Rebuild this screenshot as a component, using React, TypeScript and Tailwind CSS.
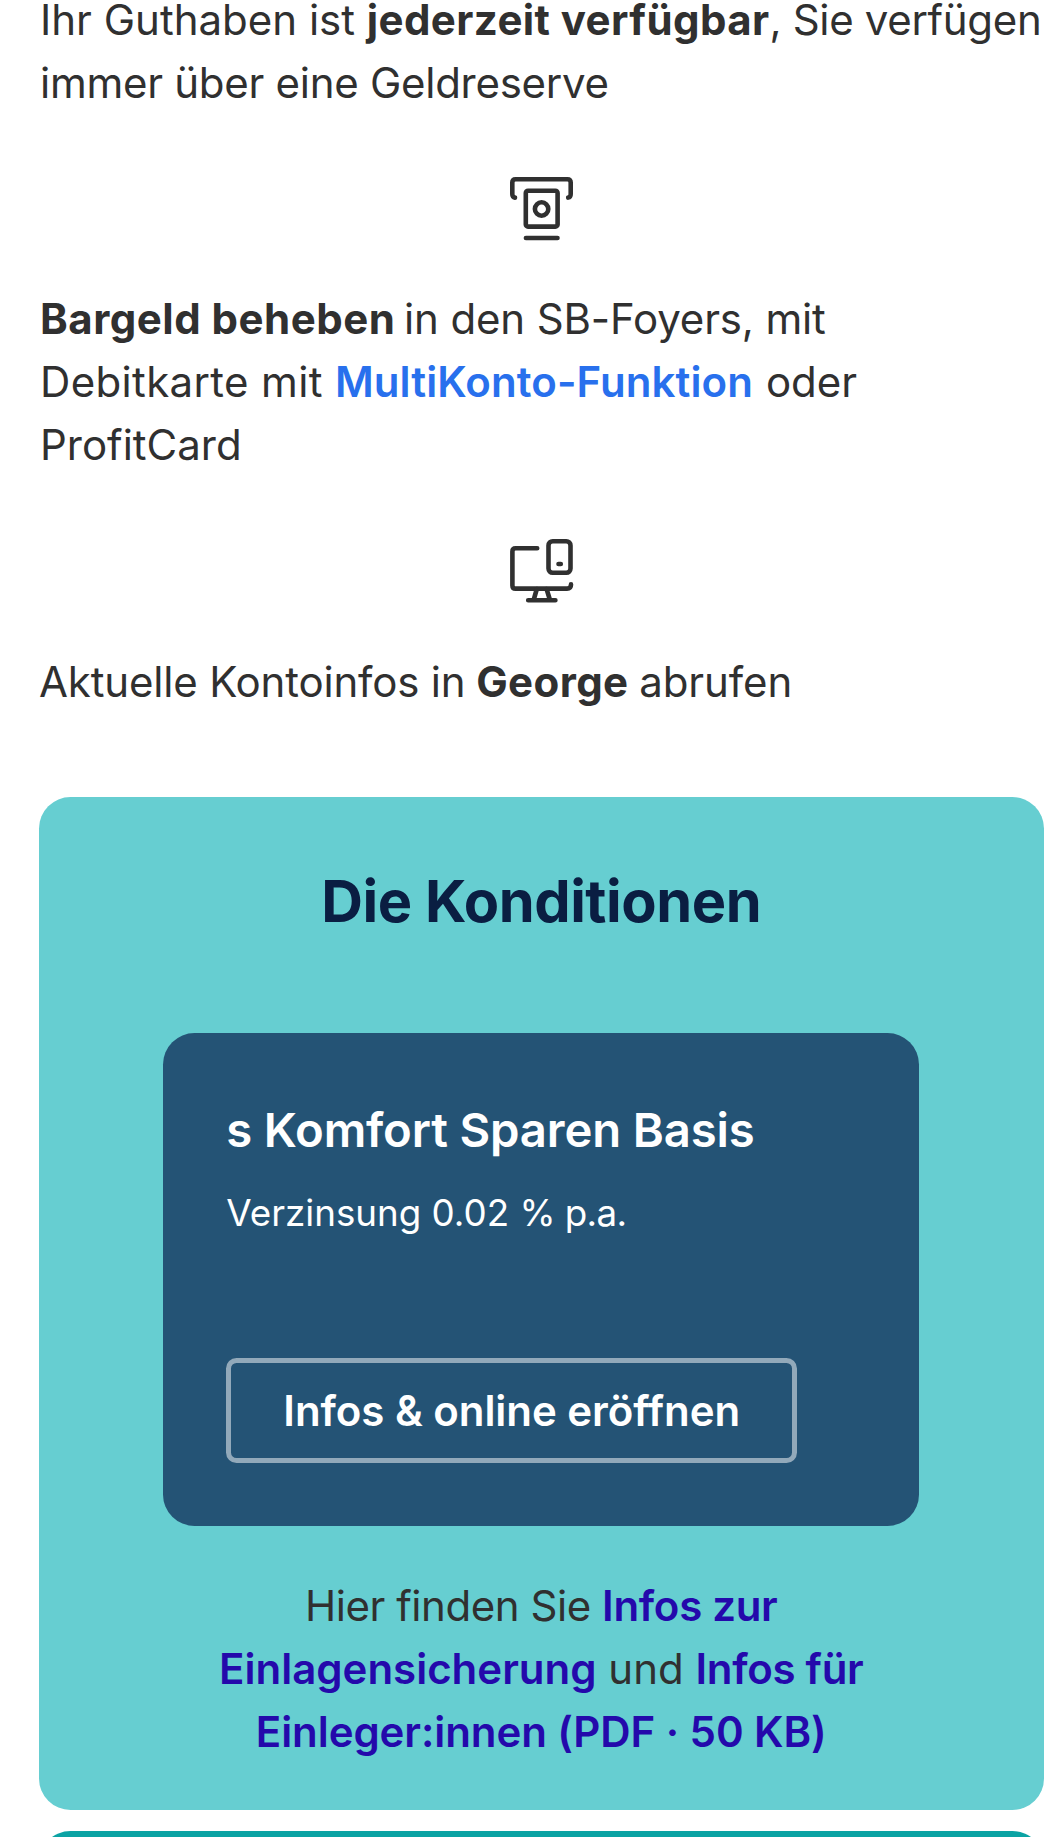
import type { ReactNode } from "react";

function Icon({ children }: { children: ReactNode }) {
  return (
    <svg
      viewBox="0 0 63 63"
      className="block size-[63px] mx-auto overflow-visible"
      fill="none"
      stroke="#303030"
      strokeWidth={4.6}
      strokeLinecap="round"
      strokeLinejoin="round"
    >
      {children}
    </svg>
  );
}

function CashIcon() {
  return (
    <Icon>
      <path d="M5 20.6Q2.3 20.2 2.3 17V5.5Q2.3 2.2 5.6 2.2H57.4Q60.7 2.2 60.7 5.5V17Q60.7 20.2 58.2 20.6" />
      <rect x="15.8" y="13.8" width="31.8" height="35.8" rx="2.2" />
      <circle cx="31.6" cy="32" r="6.7" />
      <path d="M15.9 61H47.5" />
    </Icon>
  );
}

function DevicesIcon() {
  return (
    <Icon>
      <path d="M27.2 9.3H5.6Q2.4 9.3 2.4 12.5V46.4Q2.4 49.6 5.6 49.6H57Q61 49.6 61 45.4" />
      <rect x="38.5" y="2.2" width="22" height="31.6" rx="4.2" />
      <path d="M48.5 25H50.8M18.2 61.2H45.4M26.8 50L23.8 60.5M36.6 50L39.8 60.5" />
    </Icon>
  );
}

function Text({ children }: { children: ReactNode }) {
  return <p className="text-[42px] leading-[63px] text-[#303030]">{children}</p>;
}

function InfoLink({ children }: { children: ReactNode }) {
  return (
    <a href="#" className="font-semibold text-[#2409ab]">
      {children}
    </a>
  );
}

export default function App() {
  return (
    <main className="w-[1059px] h-[1837px] overflow-hidden bg-white pl-[39px] pr-[15.5px] font-['Inter',sans-serif] whitespace-nowrap">
      <div className="-mt-3 pl-px">
        <Text>
          Ihr Guthaben ist <b className="font-bold tracking-[0.4px]">jederzeit verfügbar</b>
          <span className="tracking-[-0.33px]">, Sie verfügen</span>
          <br />
          <span className="tracking-[-0.27px]">immer über eine Geldreserve</span>
        </Text>
      </div>
      <div className="pt-[63px] pb-[47px]">
        <CashIcon />
      </div>
      <div className="pl-px">
        <Text>
          <b className="font-bold tracking-[0.5px]">Bargeld beheben</b>
          <span className="-ml-[3px] tracking-[-0.15px]"> in den SB-Foyers, mit</span>
          <br />
          <span className="tracking-[0.35px]">Debitkarte mit </span>
          <a href="#" className="font-semibold tracking-[0.1px] text-[#2870ed]">
            MultiKonto-Funktion
          </a>
          <span className="ml-px"> oder</span>
          <br />
          ProfitCard
        </Text>
      </div>
      <div className="pt-[63px] pb-12">
        <DevicesIcon />
      </div>
      <Text>
        <span className="tracking-[-0.17px]">Aktuelle Kontoinfos in </span>
        <b className="-ml-px font-bold tracking-[0.4px]">George</b>
        <span className="-ml-px tracking-[-0.1px]"> abrufen</span>
      </Text>

      <section className="mt-[84px] h-[1013px] rounded-[31.5px] bg-[#66ced1] pt-[68px] text-center">
        <h2 className="text-[57.75px] leading-[72px] font-bold tracking-[-0.45px] text-[#0a1e42]">Die Konditionen</h2>
        <div className="mx-auto mt-24 h-[493px] w-[756px] rounded-[31.5px] bg-[#245375] px-[63px] pt-[63px] text-left text-white">
          <h3 className="text-[47.25px] leading-[68px] font-semibold tracking-[-0.15px]">s Komfort Sparen Basis</h3>
          <p className="mt-5 text-[36.75px] leading-[57px]">
            Verzinsung 0.02 <span className="tracking-[-0.6px]">% p.a.</span>
          </p>
          <button className="mt-[117px] h-[105px] w-[571px] rounded-[10.5px] border-5 border-[#92a9ba] text-[42px] font-semibold tracking-[-0.05px]">
            Infos &amp; online eröffnen
          </button>
        </div>
        <div className="mt-12">
          <Text>
            <span className="tracking-[-0.45px]">Hier finden Sie </span>
            <span className="tracking-[-0.3px]">
              <InfoLink>Infos zur</InfoLink>
            </span>
            <br />
            <InfoLink>Einlagensicherung</InfoLink> und{" "}
            <span className="tracking-[-0.3px]">
              <InfoLink>Infos für</InfoLink>
            </span>
            <br />
            <span className="tracking-[-0.08px]">
              <InfoLink>Einleger:innen (PDF · 50 KB)</InfoLink>
            </span>
          </Text>
        </div>
      </section>
      <section className="mt-[21px] h-[200px] rounded-[31.5px] bg-[#0ba3a4]" />
    </main>
  );
}
